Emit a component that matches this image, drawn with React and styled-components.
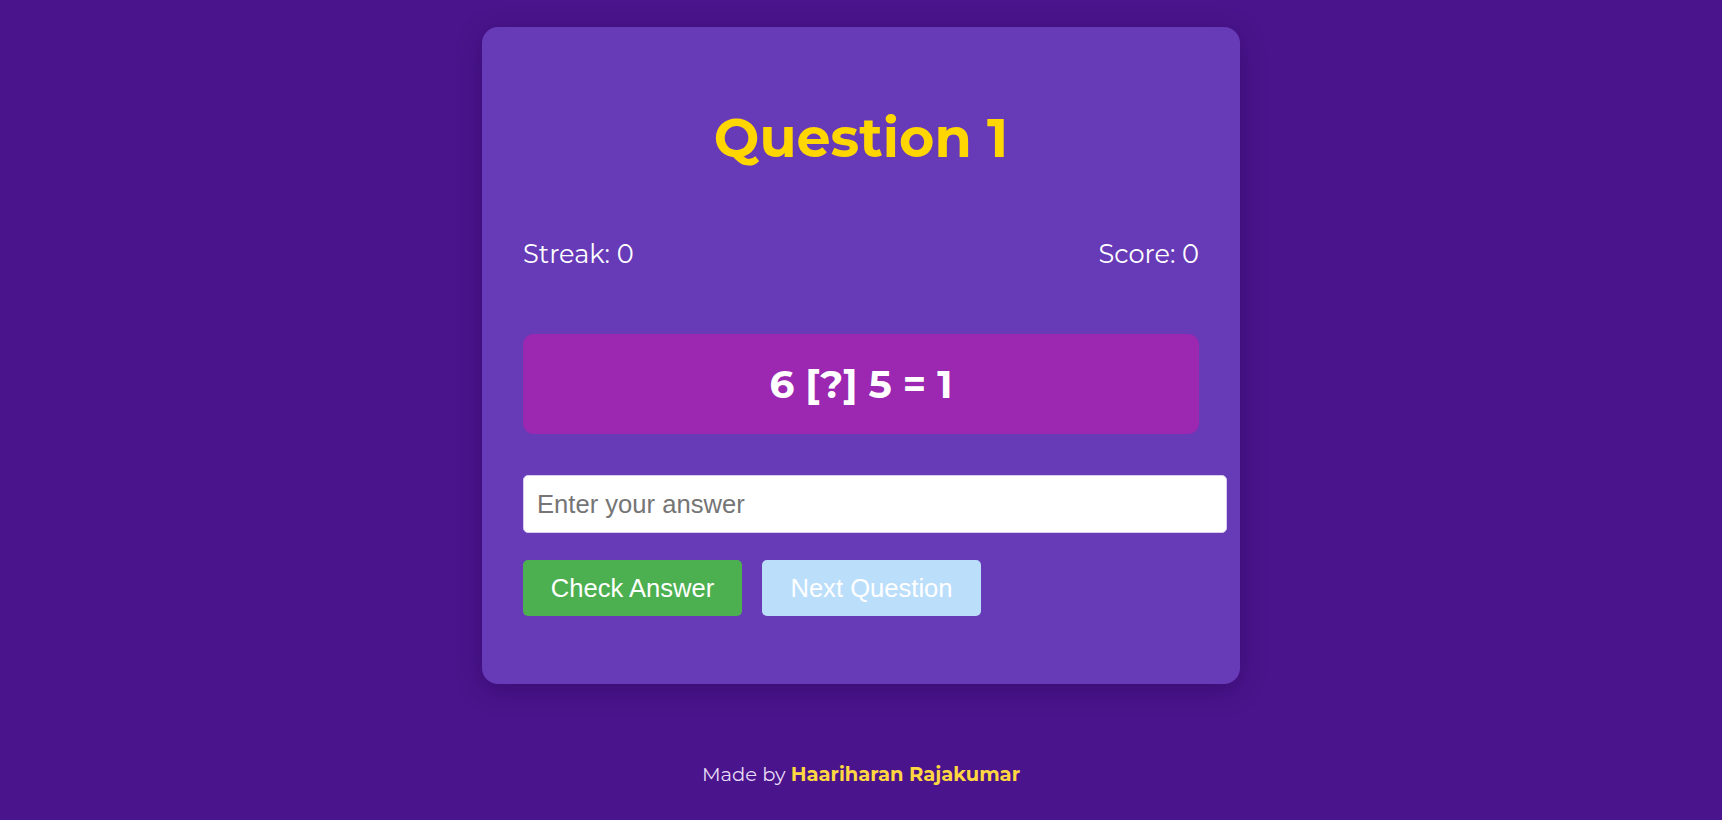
import React, { useState } from "react"
import styled, { createGlobalStyle } from "styled-components"

const GlobalStyle = createGlobalStyle`
  html, body {
    margin: 0;
    padding: 0;
    background: #4a148c;
  }
  body {
    font-family: Montserrat, Inter, "Noto Sans", sans-serif;
    color: #fff;
  }
`

const Page = styled.div`
  display: flex;
  flex-direction: column;
  align-items: center;
  padding-top: 27px;
  min-height: 820px;
  box-sizing: border-box;
`

const Card = styled.div`
  width: 758px;
  box-sizing: border-box;
  padding: 40px 41px 40px;
  background: #673ab7;
  border-radius: 16px;
  box-shadow: 0 6px 24px rgba(30, 0, 70, 0.35);
`

const Title = styled.h1`
  margin: 37px 0 66px;
  text-align: center;
  color: #ffd600;
  font-size: 54px;
  font-weight: 700;
  line-height: 68px;
`

const Stats = styled.div`
  display: flex;
  justify-content: space-between;
  font-size: 25.6px;
  line-height: 31px;
  margin-bottom: 65px;
`

const Problem = styled.div`
  height: 100px;
  display: flex;
  align-items: center;
  justify-content: center;
  background: #9c27b0;
  border-radius: 11px;
  font-size: 39px;
  font-weight: 700;
  margin-bottom: 41px;
`

const AnswerInput = styled.input`
  display: block;
  box-sizing: content-box;
  width: 676px;
  height: 30px;
  padding: 13px;
  margin: 0 0 27px;
  border: 1px solid #d9cdee;
  border-radius: 5px;
  font-family: "Liberation Sans", Arial, sans-serif;
  font-size: 25.6px;
  line-height: 30px;
  outline: none;
  color: #333;
  &::placeholder {
    color: #757575;
  }
`

const Buttons = styled.div`
  display: flex;
  gap: 20px;
  margin-bottom: 28px;
`

const Button = styled.button`
  width: 219px;
  height: 56px;
  border: none;
  border-radius: 5px;
  font-family: "Liberation Sans", Arial, sans-serif;
  font-size: 25.6px;
  color: #fff;
  background: ${p => (p.$variant === "next" ? "#bbdefb" : "#4caf50")};
  cursor: ${p => (p.disabled ? "default" : "pointer")};
`

const Footer = styled.footer`
  margin-top: 78px;
  font-size: 19.5px;
  line-height: 24px;
  color: #e6dcf7;
  strong {
    color: #ffd740;
    font-weight: 700;
  }
`

const App = () => {
  const [answer, setAnswer] = useState("")

  return (
    <>
      <GlobalStyle />
      <Page>
        <Card>
          <Title>Question 1</Title>
          <Stats>
            <span>Streak: 0</span>
            <span>Score: 0</span>
          </Stats>
          <Problem>6 [?] 5 = 1</Problem>
          <AnswerInput
            type="text"
            placeholder="Enter your answer"
            value={answer}
            onChange={e => setAnswer(e.target.value)}
          />
          <Buttons>
            <Button>Check Answer</Button>
            <Button $variant="next" disabled>
              Next Question
            </Button>
          </Buttons>
        </Card>
        <Footer>
          Made by <strong>Haariharan Rajakumar</strong>
        </Footer>
      </Page>
    </>
  )
}

export default App
